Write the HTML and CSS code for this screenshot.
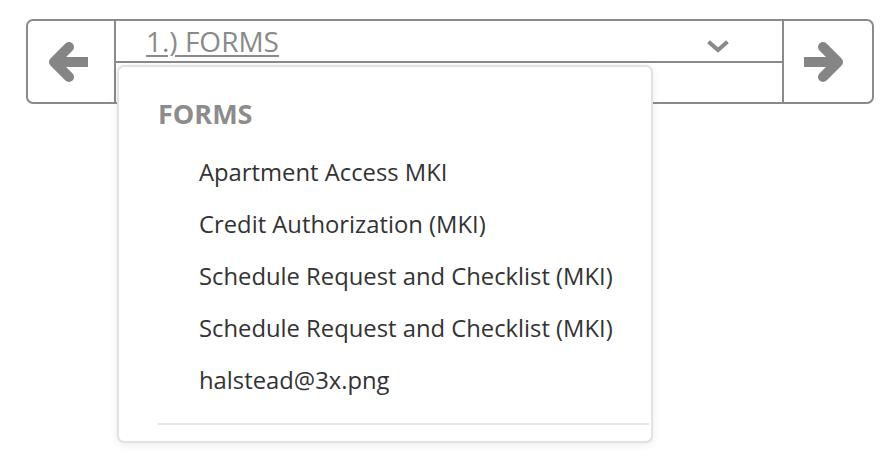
FILE: index.html
```html
<!DOCTYPE html>
<html lang="en">
<head>
<meta charset="utf-8">
<title>Forms navigator</title>
<link rel="stylesheet" href="styles.css">
</head>
<body>
<div class="page">
  <div class="nav">
    <button class="nav-btn prev" aria-label="Previous">
      <svg width="50" height="50" viewBox="0 0 50 50" class="arrow">
        <polyline points="23,10 8,25 23,40" />
        <line x1="8" y1="25" x2="42" y2="25" class="shaft" />
      </svg>
    </button>
    <div class="middle">
      <div class="select">
        <a class="select-title" href="#">1.) FORMS</a>
        <svg class="chevron" width="24" height="14" viewBox="0 0 24 14">
          <polyline points="4,4 12,11 20,4" />
        </svg>
      </div>
      <div class="dropdown">
        <div class="dd-heading">FORMS</div>
        <ul class="dd-list">
          <li>Apartment Access MKI</li>
          <li>Credit Authorization (MKI)</li>
          <li>Schedule Request and Checklist (MKI)</li>
          <li>Schedule Request and Checklist (MKI)</li>
          <li>halstead@3x.png</li>
        </ul>
        <div class="dd-sep"></div>
      </div>
    </div>
    <button class="nav-btn next" aria-label="Next">
      <svg width="50" height="50" viewBox="0 0 50 50" class="arrow">
        <polyline points="27,10 42,25 27,40" />
        <line x1="42" y1="25" x2="8" y2="25" class="shaft" />
      </svg>
    </button>
  </div>
</div>
</body>
</html>
```

FILE: styles.css
```css
html, body {
  margin: 0;
  padding: 0;
  height: 100%;
  background: #ffffff;
  font-family: "Open Sans", "Liberation Sans", sans-serif;
}

.page {
  box-sizing: border-box;
  min-height: 462px;
  height: 100%;
  padding: 19px 0 0 26px;
}

.nav {
  display: flex;
  width: 848px;
  height: 85px;
  box-sizing: border-box;
  border: 2px solid #8a8a8a;
  border-radius: 7px;
}

.nav-btn {
  box-sizing: border-box;
  margin: 0;
  padding: 0;
  border: 0;
  background: transparent;
  display: flex;
  align-items: center;
  justify-content: center;
}

.prev {
  width: 86px;
}

.next {
  width: 90px;
  border-left: 2px solid #8a8a8a;
  padding-right: 14px;
}

.arrow {
  display: block;
  fill: none;
  stroke: #858585;
  stroke-width: 10;
  stroke-linecap: round;
  stroke-linejoin: round;
}

.arrow .shaft {
  stroke-linecap: butt;
}

.middle {
  flex: 1;
  position: relative;
  border-left: 2px solid #8a8a8a;
}

.select {
  height: 40px;
  border-bottom: 2px solid #8a8a8a;
  display: flex;
  align-items: center;
  justify-content: space-between;
  padding: 0 52px 0 30px;
}

.select-title {
  font-size: 28px;
  line-height: 40px;
  color: #8a8a8a;
  text-decoration: underline;
  text-decoration-thickness: 2px;
  text-underline-offset: 3px;
}

.chevron {
  display: block;
  fill: none;
  stroke: #8a8a8a;
  stroke-width: 4;
  stroke-linecap: square;
  margin-top: 10px;
}

.dropdown {
  position: absolute;
  left: 1px;
  top: 44px;
  width: 536px;
  height: 378px;
  box-sizing: border-box;
  background: #ffffff;
  border: 2px solid #e2e2e2;
  border-radius: 7px;
  box-shadow: 0 2px 8px rgba(0, 0, 0, 0.08);
  padding: 27px 2px 0 39px;
}

.dd-heading {
  font-size: 27px;
  line-height: 40px;
  font-weight: 700;
  color: #8c8c8c;
}

.dd-list {
  list-style: none;
  margin: 12px 0 0 0;
  padding: 0 0 0 41px;
}

.dd-list li {
  font-size: 23.8px;
  line-height: 52px;
  color: #333333;
}

.dd-sep {
  margin-top: 17px;
  height: 2px;
  background: #e6e6e6;
}
```
